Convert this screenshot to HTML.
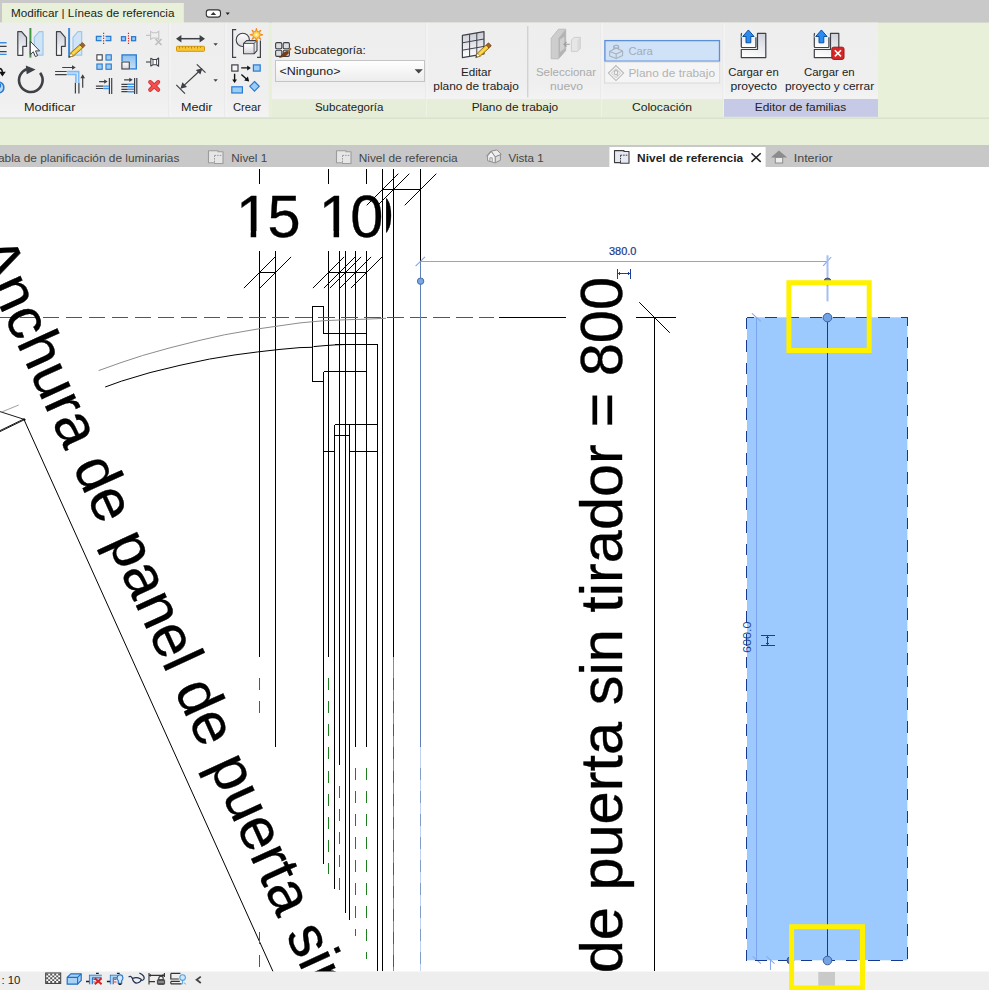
<!DOCTYPE html>
<html lang="es"><head><meta charset="utf-8"><title>Revit</title>
<style>
html,body{margin:0;padding:0;background:#fff;}
body{width:989px;height:990px;overflow:hidden;position:relative;}
svg{position:absolute;left:0;top:0;display:block;font-family:"Liberation Sans",sans-serif;}
</style></head><body>
<svg width="989" height="990" viewBox="0 0 989 990">
<defs>
<linearGradient id="gP" x1="0" y1="0" x2="0" y2="1"><stop offset="0" stop-color="#c9cbd6"/><stop offset="1" stop-color="#ffffff"/></linearGradient>
<linearGradient id="gB" x1="0" y1="0" x2="0" y2="1"><stop offset="0" stop-color="#8cc0ee"/><stop offset="1" stop-color="#c4e0f8"/></linearGradient>
<linearGradient id="gW" x1="0" y1="0" x2="0" y2="1"><stop offset="0" stop-color="#ffffff"/><stop offset="1" stop-color="#d8d8dc"/></linearGradient>
<linearGradient id="gD" x1="0" y1="0" x2="0" y2="1"><stop offset="0" stop-color="#ffffff"/><stop offset="1" stop-color="#ececec"/></linearGradient>
<linearGradient id="gPan" x1="0" y1="0" x2="0" y2="1"><stop offset="0" stop-color="#eeeeee"/><stop offset="0.8" stop-color="#efefef"/><stop offset="1" stop-color="#f3f3f3"/></linearGradient>
<linearGradient id="gL" x1="0.6" y1="0" x2="0.3" y2="1"><stop offset="0" stop-color="#d2d5dc"/><stop offset="1" stop-color="#ffffff"/></linearGradient>
<linearGradient id="gL2" x1="0" y1="0" x2="0" y2="1"><stop offset="0" stop-color="#e3e6ee"/><stop offset="1" stop-color="#ffffff"/></linearGradient>
<radialGradient id="gStar"><stop offset="0" stop-color="#fffbd0"/><stop offset="0.45" stop-color="#ffc83c"/><stop offset="1" stop-color="#f07800"/></radialGradient>
<clipPath id="cDraw"><rect x="0" y="167" width="989" height="804.5"/></clipPath>
<clipPath id="cZero"><rect x="386.1" y="190" width="7" height="50"/></clipPath>
</defs>

<rect x="0" y="0" width="989" height="990" fill="#ffffff"/>
<rect x="0" y="0" width="989" height="23" fill="#c9c9c9"/>
<rect x="0" y="22.6" width="989" height="122.6" fill="#e8f0da"/>
<rect x="2" y="3" width="181.8" height="20.5" fill="#e8f0da"/>
<rect x="0" y="22.6" width="268.6" height="94.6" fill="url(#gPan)"/>
<rect x="272" y="22.6" width="606" height="76.6" fill="url(#gPan)"/>
<rect x="272" y="99.2" width="452" height="17.8" fill="#e6eed9"/>
<rect x="724" y="99" width="154" height="17.8" fill="#c7cae6"/>
<rect x="168.5" y="23" width="1" height="94" fill="#e4e4e4"/><rect x="169.5" y="23" width="1" height="94" fill="#f8f8f8"/>
<rect x="224.5" y="23" width="1" height="94" fill="#e4e4e4"/><rect x="225.5" y="23" width="1" height="94" fill="#f8f8f8"/>
<rect x="425.5" y="23" width="1" height="76" fill="#e6e6e6"/><rect x="426.5" y="23" width="1" height="76" fill="#f7f7f7"/>
<rect x="426.0" y="99" width="1" height="18" fill="#edf3e3"/>
<rect x="600.5" y="23" width="1" height="76" fill="#e6e6e6"/><rect x="601.5" y="23" width="1" height="76" fill="#f7f7f7"/>
<rect x="601.0" y="99" width="1" height="18" fill="#edf3e3"/>
<rect x="722.5" y="23" width="1" height="76" fill="#e6e6e6"/><rect x="723.5" y="23" width="1" height="76" fill="#f7f7f7"/>
<rect x="723.0" y="99" width="1" height="18" fill="#edf3e3"/>
<rect x="527.3" y="26" width="1" height="71.5" fill="#c6c6c6"/>
<rect x="0" y="117.6" width="989" height="1" fill="#d0d9c3"/>
<rect x="0" y="145" width="989" height="22" fill="#c8c8c8"/>
<rect x="609.4" y="147" width="156.2" height="20.2" fill="#ffffff"/>
<rect x="0" y="971.5" width="989" height="18.5" fill="#eeeeee"/>
<rect x="818.3" y="972" width="16.7" height="18" fill="#c9c9c9"/>
<text x="10.9" y="17.0" font-size="11.7" fill="#222222" textLength="163.5" lengthAdjust="spacingAndGlyphs">Modificar | Líneas de referencia</text>
<text x="23.9" y="111.2" font-size="11.7" fill="#222222" textLength="51.5" lengthAdjust="spacingAndGlyphs">Modificar</text>
<text x="180.9" y="111.2" font-size="11.7" fill="#222222" textLength="31.5" lengthAdjust="spacingAndGlyphs">Medir</text>
<text x="233.0" y="111.2" font-size="11.7" fill="#222222" textLength="28.1" lengthAdjust="spacingAndGlyphs">Crear</text>
<text x="314.9" y="111.2" font-size="11.7" fill="#222222" textLength="68.5" lengthAdjust="spacingAndGlyphs">Subcategoría</text>
<text x="471.7" y="111.2" font-size="11.7" fill="#222222" textLength="86.5" lengthAdjust="spacingAndGlyphs">Plano de trabajo</text>
<text x="631.9" y="111.2" font-size="11.7" fill="#222222" textLength="60.1" lengthAdjust="spacingAndGlyphs">Colocación</text>
<text x="754.8" y="111.2" font-size="11.7" fill="#222222" textLength="91.3" lengthAdjust="spacingAndGlyphs">Editor de familias</text>
<text x="460.9" y="75.6" font-size="11.7" fill="#222222" textLength="30.5" lengthAdjust="spacingAndGlyphs">Editar</text>
<text x="433.3" y="90.1" font-size="11.7" fill="#222222" textLength="85.5" lengthAdjust="spacingAndGlyphs">plano de trabajo</text>
<text x="535.9" y="75.6" font-size="11.7" fill="#ababab" textLength="60.1" lengthAdjust="spacingAndGlyphs">Seleccionar</text>
<text x="550.0" y="90.1" font-size="11.7" fill="#ababab" textLength="33.0" lengthAdjust="spacingAndGlyphs">nuevo</text>
<text x="728.3" y="75.5" font-size="11.7" fill="#222222" textLength="50.4" lengthAdjust="spacingAndGlyphs">Cargar en</text>
<text x="730.4" y="90.1" font-size="11.7" fill="#222222" textLength="46.6" lengthAdjust="spacingAndGlyphs">proyecto</text>
<text x="804.0" y="75.5" font-size="11.7" fill="#222222" textLength="50.7" lengthAdjust="spacingAndGlyphs">Cargar en</text>
<text x="784.9" y="90.1" font-size="11.7" fill="#222222" textLength="89.2" lengthAdjust="spacingAndGlyphs">proyecto y cerrar</text>
<text x="293.8" y="53.7" font-size="11.7" fill="#222222" textLength="71.9" lengthAdjust="spacingAndGlyphs">Subcategoría:</text>
<rect x="275.5" y="60.5" width="149" height="21" fill="url(#gD)" stroke="#c4c4c4" stroke-width="1"/>
<text x="279.4" y="75.0" font-size="11.7" fill="#222222" textLength="61.1" lengthAdjust="spacingAndGlyphs">&lt;Ninguno&gt;</text>
<path d="M414.6 69.3h8.2l-4.1 4.3z" fill="#444"/>
<rect x="604.9" y="40.6" width="114.6" height="20.6" fill="#cfe2f7" stroke="#5b8fd6" stroke-width="1.3"/>
<rect x="604.7" y="62" width="115" height="21" fill="#f5f5f5" stroke="#d9d9d9" stroke-width="1"/>
<text x="628.4" y="54.9" font-size="11.7" fill="#a3acb8" textLength="24.4" lengthAdjust="spacingAndGlyphs">Cara</text>
<text x="628.4" y="76.6" font-size="11.7" fill="#b3b3b3" textLength="86.6" lengthAdjust="spacingAndGlyphs">Plano de trabajo</text>
<rect x="206.3" y="9.9" width="14.2" height="7.2" rx="2.6" fill="#fff" stroke="#333" stroke-width="1.1"/><path d="M210.6 15l2.8-3 2.8 3z" fill="#333"/><path d="M225.6 12.6h4.2l-2.1 2.4z" fill="#222"/>
<text x="179.4" y="161.8" font-size="11.7" fill="#464646" text-anchor="end" textLength="187.4" lengthAdjust="spacingAndGlyphs">Tabla de planificación de luminarias</text>
<text x="231.3" y="161.8" font-size="11.7" fill="#464646" textLength="35.9" lengthAdjust="spacingAndGlyphs">Nivel 1</text>
<text x="358.7" y="161.8" font-size="11.7" fill="#464646" textLength="99.0" lengthAdjust="spacingAndGlyphs">Nivel de referencia</text>
<text x="508.4" y="161.8" font-size="11.7" fill="#464646" textLength="35.3" lengthAdjust="spacingAndGlyphs">Vista 1</text>
<text x="637.1" y="161.8" font-size="11.7" fill="#222" font-weight="bold" textLength="106.0" lengthAdjust="spacingAndGlyphs">Nivel de referencia</text>
<text x="793.7" y="161.8" font-size="11.7" fill="#464646" textLength="39.0" lengthAdjust="spacingAndGlyphs">Interior</text>
<path d="M751.5 153.2l9.2 8.7M760.7 153.2l-9.2 8.7" stroke="#222" stroke-width="1.5" fill="none"/>
<g transform="translate(208,150.2)"><path d="M0.5 0.6H10V1.5H15V13.3H6.5V12.6H0.5Z" fill="#e6e6e6" stroke="#9c9c9c" stroke-width="1.1" stroke-linejoin="round"/><path d="M6.5 5.2H13.5M6.5 5.2V12.6" stroke="#9c9c9c" stroke-width="1" stroke-dasharray="1.6 1" fill="none"/></g>
<g transform="translate(336,150.2)"><path d="M0.5 0.6H10V1.5H15V13.3H6.5V12.6H0.5Z" fill="#e6e6e6" stroke="#9c9c9c" stroke-width="1.1" stroke-linejoin="round"/><path d="M6.5 5.2H13.5M6.5 5.2V12.6" stroke="#9c9c9c" stroke-width="1" stroke-dasharray="1.6 1" fill="none"/></g>
<g transform="translate(614,150)"><path d="M0.5 0.6H10V1.5H15V13.3H6.5V12.6H0.5Z" fill="#e6e8f2" stroke="#3c3c3c" stroke-width="1.1" stroke-linejoin="round"/><path d="M6.5 5.2H13.5M6.5 5.2V12.6" stroke="#3c3c3c" stroke-width="1" stroke-dasharray="1.6 1" fill="none"/></g>
<g stroke="#8e8e8e" stroke-width="1" stroke-linejoin="round"><path d="M495.2 156.6L500.4 154.4V160.2L495.2 162.9Z" fill="#dcdcdc"/><path d="M487.6 155.9L491.3 151.4L495.2 156.6V162.9L487.6 160.7Z" fill="#f3f3f3"/><path d="M491.3 151.2L496.8 149.9L501.3 154.3L495.2 156.8Z" fill="#ededed"/><path d="M486.3 156.3L491.3 150.8" fill="none"/><path d="M489.9 161.2V157.8H492.2V161.9" fill="none" stroke-width="0.9"/></g>
<path d="M778.9 150.4L787.2 157.6H770.9Z" fill="#8c8c8c"/><rect x="775.3" y="157.4" width="7.4" height="5.6" fill="#ececec" stroke="#8c8c8c" stroke-width="1"/>
<text x="1.4" y="983.6" font-size="11" fill="#222" textLength="19" lengthAdjust="spacingAndGlyphs">: 10</text>
<g clip-path="url(#cDraw)">
<rect x="747" y="317.3" width="160.4" height="643" fill="#9ccaff"/>
<path d="M756.5 317.5V960" stroke="#7fa4ee" stroke-width="1" fill="none" shape-rendering="crispEdges"/>
<path d="M752 313.3l8.8 8M752.7 956.4l8.2 7.3M766.4 956.4l8.2 7.3M770.5 959v11" stroke="#8aa9f0" stroke-width="1.1" fill="none"/>
<path d="M746.5 317.5V960.5" stroke="#17398f" stroke-width="1.2" stroke-dasharray="11.6 11" fill="none" shape-rendering="crispEdges" stroke-dashoffset="0"/>
<path d="M746.5 317.5H907.5" stroke="#17398f" stroke-width="1.2" stroke-dasharray="11.6 11" fill="none" shape-rendering="crispEdges" stroke-dashoffset="4"/>
<path d="M907.5 317.5V960.5" stroke="#17398f" stroke-width="1.2" stroke-dasharray="11.6 11" fill="none" shape-rendering="crispEdges" stroke-dashoffset="3.3"/>
<path d="M746.5 960.5H907.5" stroke="#17398f" stroke-width="1.2" stroke-dasharray="11.6 11" fill="none" shape-rendering="crispEdges" stroke-dashoffset="13.7"/>
<path d="M827.5 317.5V960.5" stroke="#17398f" stroke-width="1.2" fill="none" shape-rendering="crispEdges"/>
<path d="M259.5 169V183.5" stroke="#000" stroke-width="1" fill="none" shape-rendering="crispEdges"/>
<path d="M328.5 169V183.5" stroke="#000" stroke-width="1" fill="none" shape-rendering="crispEdges"/>
<path d="M366.5 169V183.5" stroke="#000" stroke-width="1" fill="none" shape-rendering="crispEdges"/>
<path d="M382.5 169V971" stroke="#000" stroke-width="1" fill="none" shape-rendering="crispEdges"/>
<path d="M393.5 169V656.6" stroke="#000" stroke-width="1" fill="none" shape-rendering="crispEdges"/>
<path d="M420.5 169V261.5" stroke="#000" stroke-width="1" fill="none" shape-rendering="crispEdges"/>
<path d="M382.5 189.5H420.5" stroke="#000" stroke-width="1" fill="none" shape-rendering="crispEdges"/>
<path d="M259.5 251V656.6" stroke="#000" stroke-width="1" fill="none" shape-rendering="crispEdges"/>
<path d="M275.5 251V746.6" stroke="#000" stroke-width="1" fill="none" shape-rendering="crispEdges"/>
<path d="M328.5 251V656.6" stroke="#000" stroke-width="1" fill="none" shape-rendering="crispEdges"/>
<path d="M339.5 251V764.8" stroke="#000" stroke-width="1" fill="none" shape-rendering="crispEdges"/>
<path d="M345.5 251V912.6" stroke="#000" stroke-width="1" fill="none" shape-rendering="crispEdges"/>
<path d="M355.5 251V746.6" stroke="#000" stroke-width="1" fill="none" shape-rendering="crispEdges"/>
<path d="M366.5 251V746.6" stroke="#000" stroke-width="1" fill="none" shape-rendering="crispEdges"/>
<path d="M259.5 272.5H275.5" stroke="#000" stroke-width="1" fill="none" shape-rendering="crispEdges"/>
<path d="M328.5 272.5H366.5" stroke="#000" stroke-width="1" fill="none" shape-rendering="crispEdges"/>
<path d="M323.5 333.5V306.5H312.5V381.5H323.5" stroke="#000" stroke-width="1" fill="none" shape-rendering="crispEdges"/>
<path d="M323.5 333.5H366.5" stroke="#000" stroke-width="1" fill="none" shape-rendering="crispEdges"/>
<path d="M323.5 371.5H366.5" stroke="#000" stroke-width="1" fill="none" shape-rendering="crispEdges"/>
<path d="M323.5 371.5V864.3" stroke="#000" stroke-width="1" fill="none" shape-rendering="crispEdges"/>
<path d="M335 344.5H377.5" stroke="#000" stroke-width="1" fill="none" shape-rendering="crispEdges"/>
<path d="M377.5 344.5V971" stroke="#000" stroke-width="1" fill="none" shape-rendering="crispEdges"/>
<path d="M334.5 424.5H377.5" stroke="#000" stroke-width="1" fill="none" shape-rendering="crispEdges"/>
<path d="M334.5 424.5V888.6" stroke="#000" stroke-width="1" fill="none" shape-rendering="crispEdges"/>
<path d="M349.5 424.5V920.3" stroke="#000" stroke-width="1" fill="none" shape-rendering="crispEdges"/>
<path d="M334.5 435.5H349.5" stroke="#000" stroke-width="1" fill="none" shape-rendering="crispEdges"/>
<path d="M323.5 451.5H334.5" stroke="#000" stroke-width="1" fill="none" shape-rendering="crispEdges"/>
<path d="M349.5 451.5H377.5" stroke="#000" stroke-width="1" fill="none" shape-rendering="crispEdges"/>
<path d="M498.6 317.5H565.6" stroke="#000" stroke-width="1" fill="none" shape-rendering="crispEdges"/>
<path d="M636 317.5H676" stroke="#000" stroke-width="1" fill="none" shape-rendering="crispEdges"/>
<path d="M654.5 317.5V971" stroke="#000" stroke-width="1" fill="none" shape-rendering="crispEdges"/>
<path d="M393.5 656.6V971" stroke="#8a8a8a" stroke-width="1" fill="none" shape-rendering="crispEdges"/>
<path d="M366.7 205.3L398.3 173.7M377.7 205.3L409.3 173.7M404.7 205.3L436.3 173.7M243.9 288.1L275.1 256.9M259.9 288.1L291.1 256.9M312.9 288.1L344.1 256.9M323.9 288.1L355.1 256.9M329.9 288.1L361.1 256.9M339.9 288.1L371.1 256.9M350.9 288.1L382.1 256.9M639.2 302.2L669.8 332.8" stroke="#000" stroke-width="1" fill="none"/>
<path d="M98.6 370.6L121 362.6 142.6 355.5 170 347.8 200 340.3 224.4 334.8 260 328.6 300 322.9 325 320.6 345 319.8 365 319.2 386 318.3" stroke="#8c8c8c" stroke-width="1" fill="none"/>
<path d="M105.2 387L121.3 381.2 150 372.6 180 365.3 209.3 359.1 235 354.9 257.8 351.9 280 349.4 300 347.6 312.5 347.3M313.5 346.6L325 345.6 335 344.9 345 344.5" stroke="#000" stroke-width="1" fill="none"/>
<path d="M23.7 418.9L273 971.5" stroke="#000" stroke-width="1" fill="none"/>
<path d="M0 411.6L25.8 419.9M0 430.6L24.7 418.6M0 431.6L24.7 419.6" stroke="#000" stroke-width="0.9" fill="none"/>
<path d="M1 412.3L18.7 405" stroke="#888" stroke-width="0.8" fill="none"/>
<path d="M0 317.5H494" stroke="#1e7d1e" stroke-width="1" fill="none" shape-rendering="crispEdges" stroke-dasharray="16.5 6.47" stroke-dashoffset="3.2"/>
<path d="M259.5 678.3V714.5" stroke="#1e7d1e" stroke-width="1" fill="none" shape-rendering="crispEdges" stroke-dasharray="12 11.05" stroke-dashoffset="0.00"/>
<path d="M259.5 932.2V966.5" stroke="#1e7d1e" stroke-width="1" fill="none" shape-rendering="crispEdges" stroke-dasharray="12 11.05" stroke-dashoffset="0.00"/>
<path d="M328.5 678.3V874" stroke="#1e7d1e" stroke-width="1" fill="none" shape-rendering="crispEdges" stroke-dasharray="12 11.05" stroke-dashoffset="0.00"/>
<path d="M339.5 786.2V891" stroke="#1e7d1e" stroke-width="1" fill="none" shape-rendering="crispEdges" stroke-dasharray="12 11.05" stroke-dashoffset="0.00"/>
<path d="M355.5 767.7V935.5" stroke="#1e7d1e" stroke-width="1" fill="none" shape-rendering="crispEdges" stroke-dasharray="12 11.05" stroke-dashoffset="0.00"/>
<path d="M366.5 767.7V959" stroke="#1e7d1e" stroke-width="1" fill="none" shape-rendering="crispEdges" stroke-dasharray="12 11.05" stroke-dashoffset="0.00"/>
<path d="M393.5 678.3V972" stroke="#1e7d1e" stroke-width="1" fill="none" shape-rendering="crispEdges" stroke-dasharray="12 11.05" stroke-dashoffset="0.00"/>
<path d="M420.5 261.5V746.6" stroke="#5f7fb8" stroke-width="1.2" fill="none" shape-rendering="crispEdges"/>
<path d="M420.5 746.6V971" stroke="#c3d2f1" stroke-width="1.4" fill="none" shape-rendering="crispEdges"/>
<path d="M420.5 767.7V972" stroke="#7f9fc9" stroke-width="1" fill="none" shape-rendering="crispEdges" stroke-dasharray="12 11.05" stroke-dashoffset="0.00"/>
<path d="M420.5 261.5H827.5" stroke="#82a6ea" stroke-width="1.1" fill="none" shape-rendering="crispEdges"/>
<path d="M415.6 266.2l9.4-9.4M823.2 265.8l8-8.8" stroke="#82a6ea" stroke-width="1.1" fill="none"/>
<path d="M827.5 255.3V301.4" stroke="#a6bff3" stroke-width="2" fill="none"/>
<circle cx="420.6" cy="281.2" r="3.2" fill="#78a7e6" stroke="#4a6aa6" stroke-width="1"/>
<text x="609" y="255" font-size="10.2" fill="#17398a" stroke="#17398a" stroke-width="0.2" textLength="27.4" lengthAdjust="spacingAndGlyphs">380.0</text>
<path d="M617.5 269V279M630.5 269V279M617.5 273.5H630.5M619.5 272v3M628.5 272v3" stroke="#1c3f94" stroke-width="1" fill="none" shape-rendering="crispEdges"/>
<text transform="translate(750.6,653) rotate(-90)" font-size="11" fill="#1c3f94" textLength="31.5" lengthAdjust="spacingAndGlyphs">600.0</text>
<path d="M760.7 635.5H774.8M760.7 645.5H774.8M767.5 635.5V645.5M766 637.5h3M766 643.5h3" stroke="#1c3f94" stroke-width="1" fill="none" shape-rendering="crispEdges"/>
<text x="234.3" y="237.4" font-size="59.5" fill="#000" stroke="#000" stroke-width="0.35"><tspan dx="1.6">1</tspan><tspan dx="-1.6">5</tspan></text>
<text x="317.2" y="237.4" font-size="59.5" fill="#000" stroke="#000" stroke-width="0.35"><tspan dx="1.6">1</tspan><tspan dx="-1.6">0</tspan></text>
<rect x="238.9" y="231.2" width="11.8" height="7.7" fill="#fff"/>
<rect x="256.2" y="231.2" width="11.3" height="7.7" fill="#fff"/>
<rect x="321.8" y="231.2" width="11.8" height="7.7" fill="#fff"/>
<rect x="339.1" y="231.2" width="11.3" height="7.7" fill="#fff"/>
<g clip-path="url(#cZero)"><text x="360.2" y="236" font-size="59.5" fill="#000" stroke="#000" stroke-width="0.35">0</text></g>
<text transform="translate(622,277) rotate(-90)" text-anchor="end" font-size="59.5" fill="#000" stroke="#000" stroke-width="0.35">Anchura de panel de puerta sin tirador = 800</text>
<text transform="translate(-26.4,249.1) rotate(65.53)" font-size="59.6" fill="#000" stroke="#000" stroke-width="0.35">Anchura de panel de puerta sin tirador = 800</text>
</g>
<circle cx="827.5" cy="281.5" r="3.4" fill="#5a7ab0" stroke="#39507a" stroke-width="1"/>
<circle cx="790.4" cy="960.4" r="3.4" fill="#5a7ab0" stroke="#39507a" stroke-width="1"/>
<circle cx="827.5" cy="317.6" r="4.3" fill="#72a3e4" stroke="#41619a" stroke-width="1"/>
<circle cx="827.5" cy="960.5" r="4.3" fill="#72a3e4" stroke="#41619a" stroke-width="1"/>
<rect x="788.9" y="282.7" width="80.3" height="67.8" fill="none" stroke="#fff100" stroke-width="5"/>
<rect x="791.6" y="926.7" width="70.9" height="61.3" fill="none" stroke="#fff100" stroke-width="5"/>
<path d="M0 42.7H6.6M0 54.4H6.6" stroke="#3a8ee0" stroke-width="1.4" fill="none"/><path d="M0 46.4H6.6M0 51.6H6.6" stroke="#3d4046" stroke-width="1.3" fill="none"/>
<path d="M0 68.5q2.3 0.6 2.4 3.6M0.3 72.4h4.2l-2.1 3z" stroke="#111" stroke-width="1.3" fill="#111"/>
<path d="M0 82.2a5.6 5.6 0 0 1 0 10.6" stroke="#2a7ad0" stroke-width="1.6" fill="#b7dbf7"/><path d="M0.4 83.8v3.6" stroke="#2a7ad0" stroke-width="1.3"/>
<g transform="translate(0,0)"><path d="M17.8 31.7h3.8l4.9 5.6v9.1h-3.7v8.9h-5z" fill="url(#gP)" stroke="#3d4046" stroke-width="1.2" stroke-linejoin="round"/><path d="M43 31.7h-3.8l-4.9 5.6v17.9h8.7z" fill="#cfe5f7" stroke="#9fc6e8" stroke-width="1.2" stroke-linejoin="round"/><path d="M30.4 28v29.6" stroke="#3f9a3f" stroke-width="2" fill="none"/></g>
<g transform="translate(38.7,0)"><path d="M17.8 31.7h3.8l4.9 5.6v9.1h-3.7v8.9h-5z" fill="url(#gP)" stroke="#3d4046" stroke-width="1.2" stroke-linejoin="round"/><path d="M43 31.7h-3.8l-4.9 5.6v17.9h8.7z" fill="#cfe5f7" stroke="#9fc6e8" stroke-width="1.2" stroke-linejoin="round"/><path d="M30.4 28v29.6" stroke="#3b8bd8" stroke-width="2" fill="none"/></g>
<path d="M30.3 41.3v13.2l3-2.7 2.1 4.8 2.2-1-2.1-4.7h4.1z" fill="#fff" stroke="#3d4046" stroke-width="1" stroke-linejoin="round"/>
<g transform="translate(68.9,57.2) rotate(-41.5)"><path d="M0 0L4.2 -2.1H16.70602923739438V2.1H4.2Z" fill="#f7c52c" stroke="#8a6a1a" stroke-width="0.8" stroke-linejoin="round"/><path d="M0 0L4.2 -2.1V2.1Z" fill="#fff" stroke="#8a6a1a" stroke-width="0.7" stroke-linejoin="round"/><path d="M0 0L1.6 -0.8V0.8Z" fill="#333"/><rect x="16.50602923739438" y="-2.1" width="3.4" height="4.2" rx="0.8" fill="#a4632c" stroke="#6d3e17" stroke-width="0.7"/><path d="M4.6 0H16.306029237394377" stroke="#fde27a" stroke-width="1"/></g>
<path d="M40.1 72.9A11.8 11.8 0 1 1 27.35 68.9" stroke="#3d4046" stroke-width="2.6" fill="none"/><path d="M25.8 65.4l9.8 4.1-8.9 4.8z" fill="#3d4046"/>
<path d="M62.2 67.5H73M55.1 71.5H66.7M55.1 74.6H66.7M75.4 82.7V93.4M78.9 82.7V93.4M82.7 76.5V87.7" stroke="#3d4046" stroke-width="1.2" fill="none"/><path d="M72 65.3l3.8 2.2-3.8 2.2zM80.4 78.2l2.3-4 2.3 4z" fill="#3d4046"/><path d="M67.2 73H77.3V82.7" stroke="#7db9f2" stroke-width="4.4" fill="none"/><path d="M67.2 73H77.3V82.7" stroke="#e4f1fd" stroke-width="1.1" fill="none"/>
<path d="M101.6 36.4H96.4v4.2h5.2M105.6 36.4h5.2v4.2h-5.2" fill="#9ccdf5" stroke="#2a7ad0" stroke-width="1.3"/><path d="M103.6 32.8V44" stroke="#e02020" stroke-width="1.2" stroke-dasharray="1.3 1.2"/>
<rect x="121.5" y="36.7" width="4" height="4" fill="#9ccdf5" stroke="#2a7ad0" stroke-width="1.3"/><rect x="131.6" y="36.7" width="4" height="4" fill="#9ccdf5" stroke="#2a7ad0" stroke-width="1.3"/><path d="M128.5 32.8V44" stroke="#e02020" stroke-width="1.2" stroke-dasharray="1.3 1.2"/>
<g stroke="#c4c4c4" stroke-width="1.1" fill="none"><path d="M146 35.4h4.6M150.6 31.6l2.2 1.2h4l2-1.4v8l-2-1.4h-4l-2.2 1.2z"/><path d="M155.5 39l6 6M161.5 39l-6 6" stroke="#bdbdbd" stroke-width="1.6"/></g>
<rect x="96.9" y="54.8" width="5.3" height="5.3" fill="#fff" stroke="#3d4046" stroke-width="1.1"/>
<rect x="106" y="54.8" width="5.3" height="5.3" fill="#9ccdf5" stroke="#2a7ad0" stroke-width="1.1"/>
<rect x="96.9" y="64" width="5.3" height="5.3" fill="#9ccdf5" stroke="#2a7ad0" stroke-width="1.1"/>
<rect x="106" y="64" width="5.3" height="5.3" fill="#9ccdf5" stroke="#2a7ad0" stroke-width="1.1"/>
<rect x="122" y="54.9" width="14.3" height="14" fill="url(#gB)" stroke="#2a7ad0" stroke-width="1.3"/><rect x="120.9" y="61" width="9.2" height="9.2" fill="#eeeeee"/><rect x="121.9" y="62" width="7.4" height="7" fill="url(#gW)" stroke="#3d4046" stroke-width="1.1"/>
<path d="M146 62h4.6" stroke="#3d4046" stroke-width="1.1"/><path d="M150.8 58.2l2.2 1.3h3.6l2-1.5v8.2l-2-1.5h-3.6l-2.2 1.3z" fill="#fff" stroke="#3d4046" stroke-width="1.1" stroke-linejoin="round"/><path d="M153 59.5v5.2M156.6 59.5v5.2" stroke="#3d4046" stroke-width="0.9"/>
<path d="M99.1 81.6H105M95.9 86.1H103.2M95.9 88.5H103.2M109.4 78V93.9M111.7 78V93.9" stroke="#3d4046" stroke-width="1.2" fill="none"/><path d="M104.2 79.5l3.4 2.1-3.4 2.1z" fill="#3d4046"/><path d="M103.2 86.1H109M103.2 88.5H109" stroke="#3d93ec" stroke-width="1.4"/>
<path d="M124.1 79.8H130M121.4 84.3H127.8M121.4 86.7H127.8M121.4 89.3H127.8M121.4 91.7H127.8M134.6 78V93.9M136.8 78V93.9" stroke="#3d4046" stroke-width="1.2" fill="none"/><path d="M129.3 77.7l3.4 2.1-3.4 2.1z" fill="#3d4046"/><path d="M127.8 84.3H134M127.8 86.7H134M127.8 89.3H134M127.8 91.7H134" stroke="#3d93ec" stroke-width="1.4"/>
<path d="M150.2 82l8 7.8M158.2 82l-8 7.8" stroke="#d22828" stroke-width="4" stroke-linecap="round" fill="none"/><path d="M150.2 82l8 7.8M158.2 82l-8 7.8" stroke="#f25050" stroke-width="2.5" stroke-linecap="round" fill="none"/>
<path d="M179 38.7H202" stroke="#3d4046" stroke-width="1.5"/><path d="M176 38.7l5.4-3.8v7.6zM205 38.7l-5.4-3.8v7.6z" fill="#3d4046"/>
<rect x="176.5" y="46.3" width="28" height="5" rx="0.8" fill="#f8c634" stroke="#cf9612" stroke-width="1"/><path d="M179.5 46.5v2M182.5 46.5v1.4M185.5 46.5v2M188.5 46.5v1.4M191.5 46.5v2M194.5 46.5v1.4M197.5 46.5v2M200.5 46.5v1.4" stroke="#b07a08" stroke-width="0.8"/>
<path d="M213.4 43.2h4.4l-2.2 2.5zM213.4 79.3h4.4l-2.2 2.5z" fill="#444"/>
<path d="M183.8 85.6L199.2 71.2M176.3 84.8l8.7 8.8M196.8 64.4l8.7 8.2" stroke="#3d4046" stroke-width="1.2" fill="none"/><path d="M180.4 88.8l2-6.6 4.6 4.8zM202.4 68.2l-2 6.4-4.6-4.6z" fill="#3d4046"/>
<path d="M236.2 29.6h-3.6v27.8h3.6M257 57.4h3.4V40.6" stroke="#3d4046" stroke-width="1.2" fill="none"/><circle cx="242.8" cy="39.9" r="6.6" fill="url(#gW)" stroke="#3d4046" stroke-width="1.1"/><path d="M243.6 43.4l3-2.8h10.4v10l-3 3.2h-10.4z" fill="#e4e5ea" stroke="#3d4046" stroke-width="1.1" stroke-linejoin="round"/><path d="M243.6 43.4h10.4v10.4M254 43.4l3-2.8" fill="none" stroke="#3d4046" stroke-width="0.9"/><rect x="244.3" y="44.1" width="9" height="9" fill="url(#gW)"/>
<path d="M256.4 28.2l1.2 3.8 3.4-2-1.8 3.5 3.8 1.3-3.8 1.3 1.8 3.5-3.4-2-1.2 3.8-1.2-3.8-3.4 2 1.8-3.5-3.8-1.3 3.8-1.3-1.8-3.5 3.4 2z" fill="url(#gStar)" stroke="#e8740a" stroke-width="0.6"/>
<rect x="231.8" y="64.9" width="6.2" height="6.2" fill="#f4f4f6" stroke="#3d4046" stroke-width="1.2"/><rect x="253.4" y="64.9" width="6.8" height="6.2" fill="#9ccdf5" stroke="#2a7ad0" stroke-width="1.2"/><rect x="231.8" y="86.8" width="10.6" height="6.2" fill="#9ccdf5" stroke="#2a7ad0" stroke-width="1.2"/><path d="M254.5 81.5l4.7 4.8-4.7 4.8-4.7-4.8z" fill="#9ccdf5" stroke="#2a7ad0" stroke-width="1.2"/><path d="M241.2 67.9H248M234.6 73.7V80M241.4 74.4l5 4.7" stroke="#111" stroke-width="1.4" fill="none"/><path d="M247.2 65.4l3.6 2.5-3.6 2.5zM232.2 79.4h4.8l-2.4 3.6zM249.2 81.6l-5-1.2 3.7-3.8z" fill="#111"/>
<g fill="#dcdde1" stroke="#3d4046" stroke-width="1.1"><rect x="275.6" y="42.6" width="6.2" height="6.2" rx="1.3"/><rect x="283.2" y="42.6" width="6.2" height="6.2" rx="1.3"/><rect x="275.6" y="50.2" width="6.2" height="6.2" rx="1.3"/><rect x="283.2" y="50.2" width="6.2" height="6.2" rx="1.3"/></g><path d="M290.6 48.8L286.8 52.4" stroke="#a5662e" stroke-width="1.8" stroke-linecap="round"/><path d="M287.2 51.4L288.8 53.1Q285.4 57.2 279.5 57.5Q281.8 55.8 282.6 54Q283.8 51.6 287.2 51.4Z" fill="#7a3e14" stroke="#4f2608" stroke-width="0.5"/>
<path d="M462.4 35.4l21.6-3.8v22.2l-21.6 3.8z" fill="url(#gP)" stroke="#3d4046" stroke-width="1.2" stroke-linejoin="round"/><path d="M469.6 34.1v22.2M476.8 32.9v22.2M462.4 42.8l21.6-3.8M462.4 50.2l21.6-3.8" stroke="#3d4046" stroke-width="1" fill="none"/>
<g transform="translate(475.8,57.4) rotate(-42.7)"><path d="M0 0L4.2 -2.1H16.11967908636165V2.1H4.2Z" fill="#f7c52c" stroke="#8a6a1a" stroke-width="0.8" stroke-linejoin="round"/><path d="M0 0L4.2 -2.1V2.1Z" fill="#fff" stroke="#8a6a1a" stroke-width="0.7" stroke-linejoin="round"/><path d="M0 0L1.6 -0.8V0.8Z" fill="#333"/><rect x="15.919679086361649" y="-2.1" width="3.4" height="4.2" rx="0.8" fill="#a4632c" stroke="#6d3e17" stroke-width="0.7"/><path d="M4.6 0H15.71967908636165" stroke="#fde27a" stroke-width="1"/></g>
<path d="M551.2 38.2l7.3-9h7.2v21.4l-7.2 8.2h-7.3z" fill="#cdcdcd" stroke="#bdbdbd" stroke-width="1" stroke-linejoin="round"/><path d="M558.5 38.2l7.2-9v21.4l-7.2 8.2z" fill="#b4b4b4"/><path d="M560 39.5l4.4-3v12.3l-4.4 3.2z" fill="#d0d0d0"/><path d="M564.2 44.2h5.6M566.6 41.9l-2.6 2.3 2.6 2.3" stroke="#9d9d9d" stroke-width="1.1" fill="none"/><path d="M571.4 40l3-2.6h6v11.2l-3 2.8h-6z" fill="#e6e6e6" stroke="#cdcdcd" stroke-width="1" stroke-linejoin="round"/><path d="M577.4 40l3-2.6v11.2l-3 2.8z" fill="#d9d9d9"/>
<g fill="none" stroke="#a9b1bc" stroke-width="1.1" stroke-linejoin="round"><path d="M609.6 51.4l6.4-3.4 6.6 3v4.6l-6.4 3-6.6-2.6z"/><path d="M609.6 51.4l6.6 2.6 6.4-3M616.2 54v4.6"/><path d="M613.8 49.4v-2.6a2.4 1.5 0 0 1 4.8 0v2.8"/><ellipse cx="616.2" cy="46.8" rx="2.4" ry="1.5"/></g>
<g fill="none" stroke="#b9b9b9" stroke-width="1.1"><path d="M616 65.6l7.6 7.5-7.6 7.5-7.6-7.5z"/><path d="M616 68.6l4.6 4.5-4.6 4.5-4.6-4.5z" stroke-width="0.8"/><ellipse cx="616" cy="72.6" rx="1.7" ry="2.2"/><path d="M616.6 74.4l1.4 1.4"/></g>
<g transform="translate(741,0)"><path d="M16.5 33.3h8.3v24.3h-24.5v-8.1h16.2z" fill="url(#gL)" stroke="#3d4046" stroke-width="1.2" stroke-linejoin="round"/><rect x="0.3" y="33.2" width="14.6" height="14.3" rx="1" fill="url(#gL2)" stroke="#3d4046" stroke-width="1.2" stroke-dasharray="38 2 2 2 2.2 2 2 100" stroke-dashoffset="-17"/><path d="M7.4 29.9l5.7 6.6h-3.3v6.3h-4.8v-6.3h-3.3z" fill="#fff" stroke="#f4f8fc" stroke-width="2.6" stroke-linejoin="round"/><path d="M7.4 29.9l5.7 6.6h-3.3v6.3h-4.8v-6.3h-3.3z" fill="#2a8cf0" stroke="#0c4f9c" stroke-width="1" stroke-linejoin="round"/></g>
<g transform="translate(814,0)"><path d="M16.5 33.3h8.3v24.3h-24.5v-8.1h16.2z" fill="url(#gL)" stroke="#3d4046" stroke-width="1.2" stroke-linejoin="round"/><rect x="0.3" y="33.2" width="14.6" height="14.3" rx="1" fill="url(#gL2)" stroke="#3d4046" stroke-width="1.2" stroke-dasharray="38 2 2 2 2.2 2 2 100" stroke-dashoffset="-17"/><path d="M7.4 29.9l5.7 6.6h-3.3v6.3h-4.8v-6.3h-3.3z" fill="#fff" stroke="#f4f8fc" stroke-width="2.6" stroke-linejoin="round"/><path d="M7.4 29.9l5.7 6.6h-3.3v6.3h-4.8v-6.3h-3.3z" fill="#2a8cf0" stroke="#0c4f9c" stroke-width="1" stroke-linejoin="round"/></g>
<rect x="831.8" y="47.2" width="12.2" height="12.2" rx="1.8" fill="#d62626" stroke="#a31414" stroke-width="1"/><path d="M834.8 50.2l6.2 6.2M841 50.2l-6.2 6.2" stroke="#fff" stroke-width="1.5"/>
<rect x="45.7" y="973" width="15" height="10.4" fill="#fff" stroke="#333" stroke-width="1"/>
<path d="M46.2 973.5h2v1.9h-2zM50.2 973.5h2v1.9h-2zM54.2 973.5h2v1.9h-2zM58.2 973.5h2v1.9h-2zM48.2 975.4h2v1.9h-2zM52.2 975.4h2v1.9h-2zM56.2 975.4h2v1.9h-2zM46.2 977.3h2v1.9h-2zM50.2 977.3h2v1.9h-2zM54.2 977.3h2v1.9h-2zM58.2 977.3h2v1.9h-2zM48.2 979.2h2v1.9h-2zM52.2 979.2h2v1.9h-2zM56.2 979.2h2v1.9h-2zM46.2 981.1h2v1.9h-2zM50.2 981.1h2v1.9h-2zM54.2 981.1h2v1.9h-2zM58.2 981.1h2v1.9h-2z" fill="#555"/>
<path d="M67.2 977.4l3.6-3.6h10.4v6.6l-3.6 3.8h-10.4z" fill="#a9d3f6" stroke="#1f6fc4" stroke-width="1.2" stroke-linejoin="round"/><path d="M67.2 977.4h10.4v6.8M77.6 977.4l3.6-3.6" fill="none" stroke="#1f6fc4" stroke-width="1.1"/>
<g transform="translate(85,0)"><path d="M4.6 984.3v-8.8h12" fill="none" stroke="#1f6fc4" stroke-width="1.3"/><path d="M7.3 984.3v-6.4h9.3" fill="none" stroke="#1f6fc4" stroke-width="1.2"/><path d="M5.3 984v-7.8h11" fill="none" stroke="#a9d3f6" stroke-width="1.2"/><path d="M1 981.5h3.2M11 973.3h2.8" stroke="#222" stroke-width="1.3"/><path d="M8.2 979.4h2.4M8.2 982h2.4" stroke="#d33" stroke-width="1"/></g>
<path d="M94.8 978.2l6.8 6M101.6 978.2l-6.8 6" stroke="#d42020" stroke-width="1.9" fill="none"/>
<g transform="translate(105.9,0)"><path d="M4.6 984.3v-8.8h12" fill="none" stroke="#1f6fc4" stroke-width="1.3"/><path d="M7.3 984.3v-6.4h9.3" fill="none" stroke="#1f6fc4" stroke-width="1.2"/><path d="M5.3 984v-7.8h11" fill="none" stroke="#a9d3f6" stroke-width="1.2"/><path d="M1 981.5h3.2M11 973.3h2.8" stroke="#222" stroke-width="1.3"/><path d="M8.2 979.4h2.4M8.2 982h2.4" stroke="#d33" stroke-width="1"/></g>
<path d="M120 974.8a3 3.3 0 0 1 1.7 6v2.6h-3.4v-2.6a3 3.3 0 0 1 1.7-6z" fill="#cfe6fb" stroke="#1f6fc4" stroke-width="1.1"/><path d="M118.6 984.4h2.8" stroke="#222" stroke-width="1.2"/>
<path d="M128.6 977.2q2-2.2 3.6 0.8q1.4 5.4 5 5q3.4-0.6 4-3.4q1.2 1.6 2.8-0.6q0.8-2.6-2-4.6l-2.6-1.4M132.6 978.6q3.4-2 8.2 0.4" fill="none" stroke="#1f2f4f" stroke-width="1.2"/>
<path d="M149 973v11.4M164.4 973v4M149 975.4h15.4M149 981.6h6" fill="none" stroke="#333" stroke-width="1.1" stroke-dasharray="none"/><path d="M150.4 974.2v2.4M163 974.2v2.4" stroke="#333" stroke-width="1"/><rect x="157.4" y="979.6" width="7.2" height="4.8" rx="0.8" fill="#555" stroke="#333" stroke-width="0.8"/><path d="M158.8 979.6v-1.2a2.2 2.2 0 0 1 4.4 0v1.2" fill="none" stroke="#333" stroke-width="1.1"/><path d="M158.2 982h5.6" stroke="#ddd" stroke-width="0.8"/>
<path d="M170.8 973.4h9.6M170.8 973.4v5.6h8M170.8 981.4h9M170.8 983.8h10.8M170.8 981.4v2.4" fill="none" stroke="#333" stroke-width="1.2"/><circle cx="182.6" cy="977.6" r="2.8" fill="#cfe6fb" stroke="#58a0e0" stroke-width="1.1"/><path d="M182.6 980.6v3.6M184.4 982.6l1.2 1.8" stroke="#58a0e0" stroke-width="1"/>
<path d="M200.8 976.6l-4.2 3.2 4.2 3.2" fill="none" stroke="#444" stroke-width="1.8"/>
</svg>
</body></html>
